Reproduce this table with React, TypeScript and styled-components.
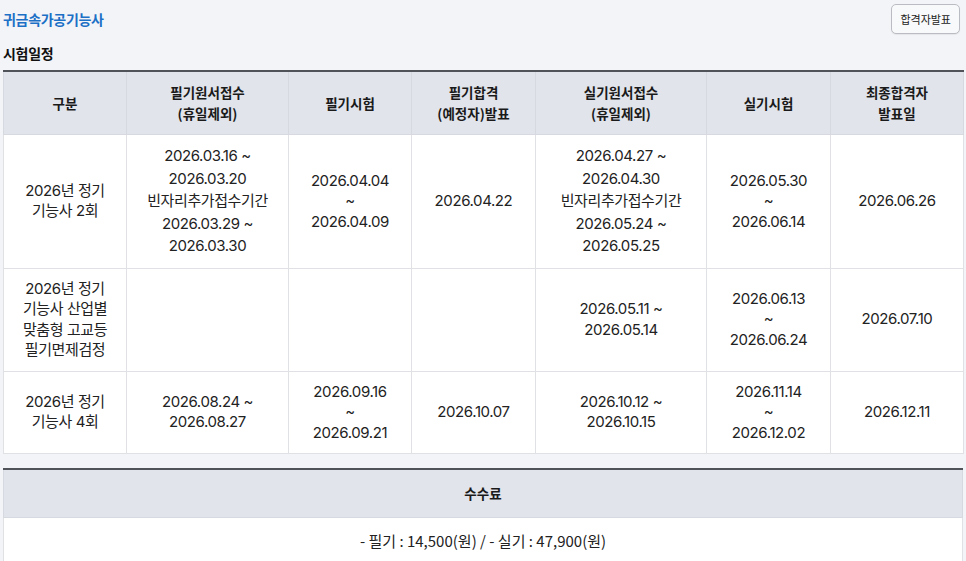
import React from "react";
import styled, { createGlobalStyle } from "styled-components";

const Global = createGlobalStyle`
  html, body { margin: 0; padding: 0; background: #f3f4f7; }
  body { font-family: Inter, "Noto Sans CJK KR", sans-serif; color: #222; }
`;

const Page = styled.div`
  padding: 0 3px;
`;

const TopBar = styled.div`
  display: flex;
  align-items: center;
  justify-content: space-between;
  padding: 3px 3px 0 0;
  height: 31px;
`;

const Title = styled.h1`
  margin: 0;
  font-family: "Noto Sans CJK KR", sans-serif;
  font-size: 14px;
  font-weight: 700;
  color: #1c70c6;
  letter-spacing: -0.3px;
`;

const Button = styled.button`
  height: 30px;
  padding: 0 8px;
  border: 1px solid #b9bcc2;
  border-radius: 5px;
  background: #f8f9fb;
  font-family: "Noto Sans CJK KR", sans-serif;
  font-size: 11px;
  color: #222;
  box-shadow: 0 1px 1px rgba(0, 0, 0, 0.06);
`;

const Section = styled.h2`
  margin: 9px 0 7px;
  font-family: "Noto Sans CJK KR", sans-serif;
  font-size: 14px;
  line-height: 20px;
  font-weight: 700;
  color: #111;
  letter-spacing: -0.3px;
`;

const Table = styled.table<{ $gap?: number }>`
  width: 100%;
  table-layout: fixed;
  border-collapse: collapse;
  border-top: 2px solid #50545a;
  margin-top: ${(p) => p.$gap ?? 0}px;
  background: #fff;
`;

const Th = styled.th<{ $pad?: number }>`
  background: #e1e4eb;
  border: 1px solid #d6d9df;
  border-top: none;
  padding: ${(p) => p.$pad ?? 10}px 4px;
  font-family: "Noto Sans CJK KR", sans-serif;
  font-size: 13.5px;
  line-height: 21px;
  font-weight: 700;
  color: #1a1a1a;
  text-align: center;
  vertical-align: middle;
`;

const Td = styled.td<{ $lh?: number; $fee?: boolean }>`
  background: #fff;
  border: 1px solid #dfe1e5;
  padding: ${(p) => (p.$fee ? "13px 4px" : "10px 4px")};
  font-family: ${(p) =>
    p.$fee ? `"Noto Sans CJK KR", sans-serif` : `Inter, "Noto Sans CJK KR", sans-serif`};
  font-size: 15px;
  line-height: ${(p) => p.$lh ?? 20.5}px;
  letter-spacing: ${(p) => (p.$fee ? "0" : "-0.4px")};
  color: #222;
  text-align: center;
  vertical-align: middle;
`;

const widths = [123, 162, 123, 124, 171, 124, 133];

const headers = [
  ["구분"],
  ["필기원서접수", "(휴일제외)"],
  ["필기시험"],
  ["필기합격", "(예정자)발표"],
  ["실기원서접수", "(휴일제외)"],
  ["실기시험"],
  ["최종합격자", "발표일"],
];

type Cell = { lines: string[]; lh?: number };

const rows: Cell[][] = [
  [
    { lines: ["2026년 정기", "기능사 2회"] },
    {
      lines: ["2026.03.16 ~", "2026.03.20", "빈자리추가접수기간", "2026.03.29 ~", "2026.03.30"],
      lh: 22.5,
    },
    { lines: ["2026.04.04", "~", "2026.04.09"] },
    { lines: ["2026.04.22"] },
    {
      lines: ["2026.04.27 ~", "2026.04.30", "빈자리추가접수기간", "2026.05.24 ~", "2026.05.25"],
      lh: 22.5,
    },
    { lines: ["2026.05.30", "~", "2026.06.14"] },
    { lines: ["2026.06.26"] },
  ],
  [
    { lines: ["2026년 정기", "기능사 산업별", "맞춤형 고교등", "필기면제검정"] },
    { lines: [] },
    { lines: [] },
    { lines: [] },
    { lines: ["2026.05.11 ~", "2026.05.14"] },
    { lines: ["2026.06.13", "~", "2026.06.24"] },
    { lines: ["2026.07.10"] },
  ],
  [
    { lines: ["2026년 정기", "기능사 4회"] },
    { lines: ["2026.08.24 ~", "2026.08.27"] },
    { lines: ["2026.09.16", "~", "2026.09.21"] },
    { lines: ["2026.10.07"] },
    { lines: ["2026.10.12 ~", "2026.10.15"] },
    { lines: ["2026.11.14", "~", "2026.12.02"] },
    { lines: ["2026.12.11"] },
  ],
];

const Lines = ({ lines }: { lines: string[] }) => (
  <>
    {lines.map((l, i) => (
      <React.Fragment key={i}>
        {i > 0 && <br />}
        {l}
      </React.Fragment>
    ))}
  </>
);

export default function App() {
  return (
    <Page>
      <Global />
      <TopBar>
        <Title>귀금속가공기능사</Title>
        <Button>합격자발표</Button>
      </TopBar>
      <Section>시험일정</Section>
      <Table>
        <colgroup>
          {widths.map((w, i) => (
            <col key={i} style={{ width: w }} />
          ))}
        </colgroup>
        <thead>
          <tr>
            {headers.map((h, i) => (
              <Th key={i}>
                <Lines lines={h} />
              </Th>
            ))}
          </tr>
        </thead>
        <tbody>
          {rows.map((r, ri) => (
            <tr key={ri}>
              {r.map((c, ci) => (
                <Td key={ci} $lh={c.lh}>
                  <Lines lines={c.lines} />
                </Td>
              ))}
            </tr>
          ))}
        </tbody>
      </Table>
      <Table $gap={14}>
        <thead>
          <tr>
            <Th $pad={13}>수수료</Th>
          </tr>
        </thead>
        <tbody>
          <tr>
            <Td $fee>- 필기 : 14,500(원) / - 실기 : 47,900(원)</Td>
          </tr>
        </tbody>
      </Table>
    </Page>
  );
}
